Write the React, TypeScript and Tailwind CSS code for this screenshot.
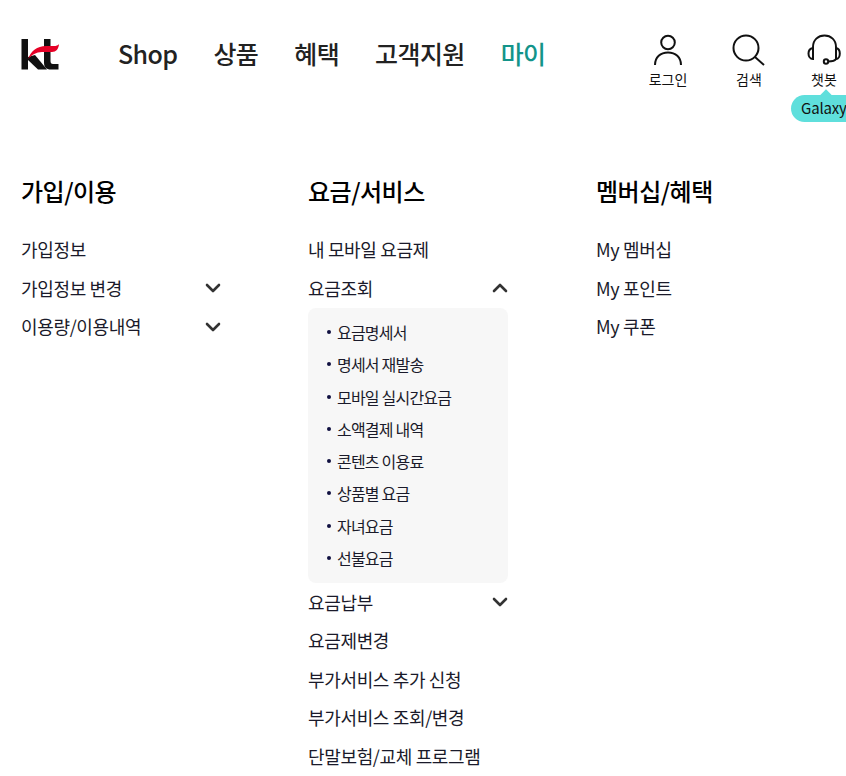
import { ChevronDown, ChevronUp } from 'lucide-react';

const font = "font-['Noto_Sans_CJK_KR','Noto_Sans',sans-serif]";

const navItems = ['Shop', '상품', '혜택', '고객지원'];

const billItems = [
  '요금명세서',
  '명세서 재발송',
  '모바일 실시간요금',
  '소액결제 내역',
  '콘텐츠 이용료',
  '상품별 요금',
  '자녀요금',
  '선불요금',
];

function Row({ label, open, closed }: { label: string; open?: boolean; closed?: boolean }) {
  return (
    <div className="flex h-[38.5px] items-center justify-between text-[18px] tracking-[-0.35px] text-[#1a1a2a]">
      <span>{label}</span>
      {open && <ChevronUp className="h-[24px] w-[24px] -mr-1 text-[#333]" strokeWidth={2.6} />}
      {closed && <ChevronDown className="h-[24px] w-[24px] -mr-1 text-[#333]" strokeWidth={2.6} />}
    </div>
  );
}

function UserIcon() {
  return (
    <svg width="30" height="32" viewBox="0 0 30 32" fill="none" stroke="#111" strokeWidth="2">
      <circle cx="15" cy="8.500" r="6.800" />
      <path d="M2 31c0-8 5.500-12.500 13-12.500S28 23 28 31" />
    </svg>
  );
}

function SearchIcon() {
  return (
    <svg width="34" height="32" viewBox="0 0 34 32" fill="none" stroke="#111" strokeWidth="2">
      <circle cx="14" cy="14" r="12.500" />
      <path d="M23 23l9 8" />
    </svg>
  );
}

function HeadsetIcon() {
  return (
    <svg width="34" height="32" viewBox="0 0 34 32" fill="none" stroke="#111" strokeWidth="2">
      <path d="M6 15V13C6 6 11 1.500 17.500 1.500S29 6 29 13v2" />
      <path d="M6 14c-3 .5-4.500 3-4.500 5.500S3 25 6 25z" />
      <path d="M29 14c2.500 .5 3.800 3 3.800 5.500S31.500 25 29 25z" />
      <path d="M29 25c-1 2-4 2.500-8 2.500" />
      <circle cx="19" cy="27.500" r="2.200" />
    </svg>
  );
}

function KtLogo() {
  return (
    <svg width="40" height="33" viewBox="0 0 40 33">
      <rect x="1.500" y="0" width="6.500" height="30.500" fill="#111" />
      <path d="M8 18 15 16 27 30.500H18L8 21z" fill="#111" />
      <path d="M24 0h6.500v22c0 2 .8 3 2.500 3h5.500v5.500H31c-5 0-7-2.500-7-7z" fill="#111" />
      <path d="M8 20C11 12 17 7 26 7h8c2 0 4-.5 5-2-.3 5-3 8-7 8H22c-6 0-10 3-14 7z" fill="#e60026" />
    </svg>
  );
}

export default function App() {
  return (
    <div className={`${font} h-[776px] w-[846px] overflow-hidden bg-white`}>
      <header className="relative flex h-[110px] items-start pl-5">
        <div className="mt-[39px]">
          <KtLogo />
        </div>
        <nav className="ml-[58px] mt-[34px] flex gap-[36px] text-[25px] font-medium leading-[38px] tracking-[-0.6px] text-[#222]">
          {navItems.map((item) => (
            <span key={item}>{item}</span>
          ))}
          <span className="text-[#13948a]">마이</span>
        </nav>
        <div className="ml-auto -mr-2 mt-[34px] flex gap-[15px] text-[14px] leading-[20px] text-[#111]">
          <div className="mr-[6px] flex w-[60px] flex-col items-center gap-[3px]">
            <UserIcon />
            <span>로그인</span>
          </div>
          <div className="flex w-[60px] flex-col items-center gap-[3px]">
            <SearchIcon />
            <span>검색</span>
          </div>
          <div className="flex w-[60px] flex-col items-center gap-[3px]">
            <HeadsetIcon />
            <span>챗봇</span>
          </div>
        </div>
        <div className="absolute left-[791px] top-[95px] flex h-[27px] w-[80px] items-center rounded-full bg-[#5fdfdc] pl-[10px] text-[15px] tracking-[-0.2px] text-[#111]">
          Galaxy
          <span className="absolute left-[31px] top-[-4px] h-2 w-2 rotate-45 bg-[#5fdfdc]" />
        </div>
      </header>

      <main className="mt-[63px] grid grid-cols-[287px_288px_1fr] pl-[21px]">
        <section className="w-[200px]">
          <h2 className="mb-[21.5px] text-[24px] font-medium leading-[36px] tracking-[-0.5px] text-black">가입/이용</h2>
          <Row label="가입정보" />
          <Row label="가입정보 변경" closed />
          <Row label="이용량/이용내역" closed />
        </section>

        <section className="w-[200px]">
          <h2 className="mb-[21.5px] text-[24px] font-medium leading-[36px] tracking-[-0.5px] text-black">요금/서비스</h2>
          <Row label="내 모바일 요금제" />
          <Row label="요금조회" open />
          <ul className="rounded-lg bg-[#f7f7f7] pb-[9px] pt-[8.5px] pl-[19px]">
            {billItems.map((item) => (
              <li key={item} className="flex h-[32.25px] items-center gap-[6px] text-[16px] tracking-[-0.8px] text-[#1a1a2a]">
                <span className="h-[4px] w-[4px] rounded-full bg-[#101040]" />
                {item}
              </li>
            ))}
          </ul>
          <Row label="요금납부" closed />
          <Row label="요금제변경" />
          <Row label="부가서비스 추가 신청" />
          <Row label="부가서비스 조회/변경" />
          <Row label="단말보험/교체 프로그램" />
        </section>

        <section>
          <h2 className="mb-[21.5px] text-[24px] font-medium leading-[36px] tracking-[-0.5px] text-black">멤버십/혜택</h2>
          <Row label="My 멤버십" />
          <Row label="My 포인트" />
          <Row label="My 쿠폰" />
        </section>
      </main>
    </div>
  );
}
